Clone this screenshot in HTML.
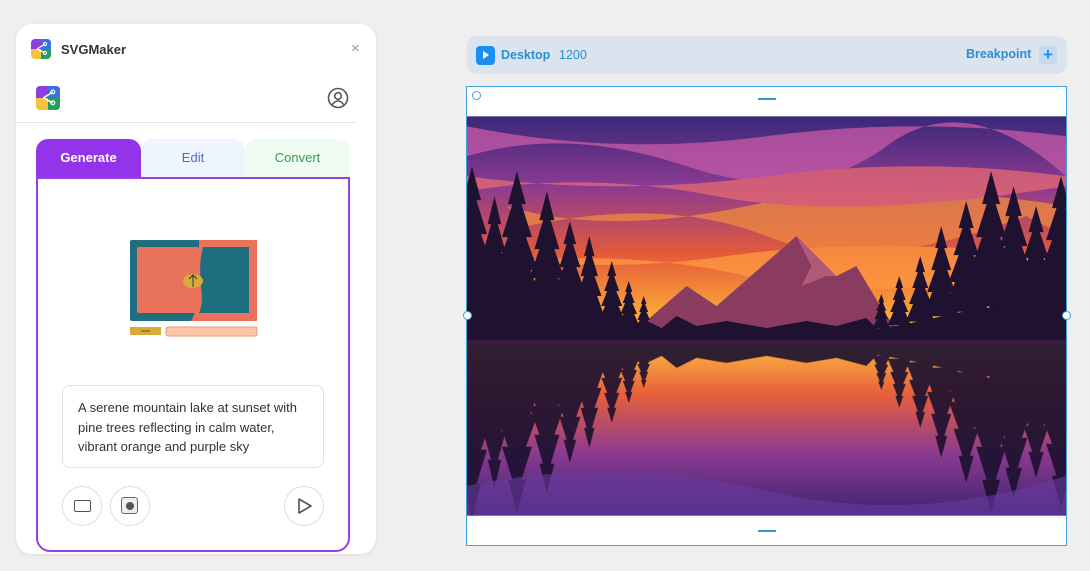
<!DOCTYPE html><html><head><style>
body{margin:0;width:1090px;height:571px;background:#efefef;font-family:"Liberation Sans",sans-serif;position:relative;overflow:hidden}
.panel{position:absolute;left:16px;top:24px;width:360px;height:530px;background:#fff;border-radius:16px;box-shadow:0 1px 4px rgba(0,0,0,.08)}
.logo{position:absolute;width:20px;height:20px;border-radius:4px;overflow:hidden}
.tab{position:absolute;top:139px;height:38px;line-height:38px;text-align:center;font-size:13px;border-radius:12px 12px 0 0}
.circ{position:absolute;top:486px;width:38px;height:38px;border:1px solid #ddd;border-radius:50%;background:#fff}
</style></head><body>
<div class="panel"></div>
<svg class="logo" style="left:31px;top:39px" viewBox="0 0 20 20"><rect width="20" height="10" fill="#8b3fe0"/><rect x="10" width="10" height="10" fill="#3b6fe8"/><rect y="10" width="10" height="10" fill="#f5c23a"/><rect x="10" y="10" width="10" height="10" fill="#22a05a"/><path d="M6 10L14 5M6 10L14 14" stroke="#fff" stroke-width="1.3"/><circle cx="14" cy="5" r="1.6" fill="none" stroke="#fff"/><circle cx="14" cy="14" r="1.6" fill="none" stroke="#fff"/></svg>
<div style="position:absolute;left:61px;top:42px;font-size:13px;font-weight:bold;color:#333">SVGMaker</div>
<div style="position:absolute;left:351px;top:40px;font-size:15px;color:#999">×</div>
<svg class="logo" style="left:36px;top:86px;width:24px;height:24px" viewBox="0 0 20 20"><rect width="20" height="10" fill="#8b3fe0"/><rect x="10" width="10" height="10" fill="#3b6fe8"/><rect y="10" width="10" height="10" fill="#f5c23a"/><rect x="10" y="10" width="10" height="10" fill="#22a05a"/><path d="M6 10L14 5M6 10L14 14" stroke="#fff" stroke-width="1.3"/><circle cx="14" cy="5" r="1.6" fill="none" stroke="#fff"/><circle cx="14" cy="14" r="1.6" fill="none" stroke="#fff"/></svg>
<svg style="position:absolute;left:327px;top:87px" width="22" height="22" viewBox="0 0 22 22" fill="none" stroke="#555" stroke-width="1.6"><circle cx="11" cy="11" r="9.5"/><circle cx="11" cy="9" r="3.3"/><path d="M5 18c2-3 4-4 6-4s4 1 6 4"/></svg>
<div style="position:absolute;left:16px;top:122px;width:340px;height:1px;background:#e3e3e3"></div>
<div class="tab" style="left:245px;width:105px;background:#eefcf1;color:#3a9a55">Convert</div>
<div class="tab" style="left:141px;width:104px;background:#eef5ff;color:#4a6fc0">Edit</div>
<div class="tab" style="left:36px;width:105px;background:#9333ea;color:#fff;font-weight:bold">Generate</div>
<div style="position:absolute;left:36px;top:177px;width:310px;height:371px;border:2px solid #9b3fe0;border-radius:0 0 14px 14px;background:#fff"></div>
<svg style="position:absolute;left:129px;top:239px" width="130" height="100" viewBox="0 0 130 100"><rect x="1" y="1" width="127" height="81" rx="2" fill="#1f6e80"/><path d="M70 1H128V82H62C75 60 62 45 70 20Z" fill="#e8735a"/><rect x="8" y="8" width="62" height="66" rx="2" fill="#e8735a"/><path d="M74 8H120V74H70C78 55 66 40 74 8Z" fill="#1f6e80"/><ellipse cx="64" cy="42" rx="10" ry="7" fill="#d9a93a"/><path d="M64 48V36M60 40l4-4 4 4" stroke="#333" fill="none"/><rect x="1" y="88" width="31" height="8" fill="#d9a93a"/><path d="M12 92h9" stroke="#555"/><rect x="37" y="88" width="91" height="9" rx="2" fill="#fcc5a5" stroke="#e89a80"/></svg>
<div style="position:absolute;left:62px;top:385px;width:262px;height:83px;border:1px solid #e2e2e2;border-radius:8px;font-size:13px;line-height:19.5px;color:#333;padding:12px 18px 0 15px;box-sizing:border-box">A serene mountain lake at sunset with pine trees reflecting in calm water, vibrant orange and purple sky</div>
<div class="circ" style="left:62px"><div style="position:absolute;left:11px;top:13px;width:15px;height:10px;border:1.6px solid #555;border-radius:2px"></div></div>
<div class="circ" style="left:110px"><div style="position:absolute;left:10px;top:10px;width:15px;height:15px;border:1.5px solid #666;border-radius:3px;background:#eee"></div><div style="position:absolute;left:15px;top:15px;width:8px;height:8px;border-radius:50%;background:#555"></div></div>
<div class="circ" style="left:284px"><svg style="position:absolute;left:11px;top:10px" width="18" height="18" viewBox="0 0 18 18"><path d="M3 2L15 9L3 16Z" fill="none" stroke="#555" stroke-width="1.6" stroke-linejoin="round"/></svg></div>

<div style="position:absolute;left:467px;top:36px;width:600px;height:38px;background:#dbe4ee;border-radius:10px"></div>
<div style="position:absolute;left:476px;top:46px;width:19px;height:19px;background:#1a8ff0;border-radius:4px"><div style="position:absolute;left:7px;top:5px;border-left:6px solid #fff;border-top:4.5px solid transparent;border-bottom:4.5px solid transparent"></div></div>
<div style="position:absolute;left:501px;top:48px;font-size:12.5px;color:#2a8fd6;font-weight:bold">Desktop</div>
<div style="position:absolute;left:559px;top:48px;font-size:12.5px;color:#2a8fd6">1200</div>
<div style="position:absolute;left:966px;top:47px;font-size:12.5px;color:#2a8fd6;font-weight:bold">Breakpoint</div>
<div style="position:absolute;left:1039px;top:46px;width:18px;height:18px;background:#c5daf0;border-radius:4px;color:#1a8ff0;font-size:17px;line-height:18px;text-align:center;font-weight:bold">+</div>
<div style="position:absolute;left:466px;top:86px;width:599px;height:458px;border:1px solid #3ea0dd;background:#fff"></div>
<div style="position:absolute;left:472px;top:91px;width:7px;height:7px;border:1px solid #3ea0dd;border-radius:50%"></div>
<div style="position:absolute;left:758px;top:98px;width:18px;height:2px;background:#2a9ad0"></div>
<div style="position:absolute;left:758px;top:530px;width:18px;height:2px;background:#2a9ad0"></div>
<svg style="position:absolute;left:467px;top:116px" width="599" height="400" viewBox="0 0 600 400">
<defs><linearGradient id="s" x1="0" y1="0" x2="0" y2="1"><stop offset="0" stop-color="#3a2878"/><stop offset=".3" stop-color="#8a3a92"/><stop offset=".6" stop-color="#e45a3a"/><stop offset=".9" stop-color="#ffb338"/><stop offset="1" stop-color="#ffd050"/></linearGradient>
<linearGradient id="w" x1="0" y1="0" x2="0" y2="1"><stop offset="0" stop-color="#ffc040"/><stop offset=".3" stop-color="#e8603a"/><stop offset=".65" stop-color="#8a3a90"/><stop offset="1" stop-color="#3a2470"/></linearGradient>
<symbol id="t" viewBox="0 0 40 100" preserveAspectRatio="none"><path d="M20 0L26 20L23 20L30 40L26 40L34 60L29 60L38 82L2 82L11 60L6 60L14 40L10 40L17 20L14 20Z"/></symbol>
<g id="trees" fill="#1e1230">
<use href="#t" x="-25" y="50" width="60" height="170"/><use href="#t" x="5" y="80" width="45" height="140"/><use href="#t" x="20" y="55" width="60" height="165"/><use href="#t" x="55" y="75" width="50" height="145"/><use href="#t" x="82" y="105" width="42" height="115"/><use href="#t" x="105" y="120" width="35" height="100"/><use href="#t" x="130" y="145" width="30" height="75"/><use href="#t" x="150" y="165" width="24" height="55"/><use href="#t" x="168" y="180" width="18" height="40"/>
<use href="#t" x="565" y="60" width="60" height="160"/><use href="#t" x="545" y="90" width="50" height="130"/><use href="#t" x="520" y="70" width="55" height="150"/><use href="#t" x="495" y="55" width="60" height="165"/><use href="#t" x="475" y="85" width="50" height="135"/><use href="#t" x="455" y="110" width="40" height="110"/><use href="#t" x="438" y="140" width="32" height="80"/><use href="#t" x="420" y="160" width="26" height="60"/><use href="#t" x="405" y="178" width="20" height="42"/>
<path d="M0 180L100 195L150 205L185 212L190 226H0Z"/><path d="M600 180L500 195L440 208L405 214L400 226H600Z"/>
<path d="M170 222L180 205L195 212L210 200L230 210L260 205L300 212L340 205L370 210L400 202L420 222L420 226H170Z"/>
</g></defs>
<rect width="600" height="230" fill="url(#s)"/><rect y="225" width="600" height="175" fill="url(#w)"/>
<g opacity=".75"><path d="M0 40Q100 10 220 50T420 30T600 60V20Q450 0 300 20T0 10Z" fill="#c85aa8"/><path d="M60 110Q200 80 300 120T560 100L600 120V90Q420 60 280 90T40 90Z" fill="#f08a40"/><path d="M0 150Q150 130 280 160T600 150V140Q400 120 260 140T0 135Z" fill="#ff9a40"/><path d="M0 75Q120 55 250 80T600 70V60Q450 40 300 60T0 60Z" fill="#e86a70"/></g>
<circle cx="285" cy="190" r="20" fill="#ffd45a"/>
<path d="M160 222L220 170L250 190L330 120L370 160L390 150L420 200L440 222Z" fill="#8a3c60"/>
<path d="M330 120L345 150L335 170L360 160L370 160Z" fill="#b05a78"/>
<use href="#trees"/>
<g transform="translate(0,452) scale(1,-1)" opacity=".92"><use href="#trees"/></g>
<rect y="224" width="600" height="4" fill="#3a1c40"/>
<path d="M0 370Q150 340 300 375T600 360V400H0Z" fill="#6a3aa0" opacity=".6"/>
</svg>
<div style="position:absolute;left:463px;top:311px;width:7px;height:7px;border:1px solid #3ea0dd;border-radius:50%;background:#fff"></div>
<div style="position:absolute;left:1062px;top:311px;width:7px;height:7px;border:1px solid #3ea0dd;border-radius:50%;background:#fff"></div>
</body></html>
